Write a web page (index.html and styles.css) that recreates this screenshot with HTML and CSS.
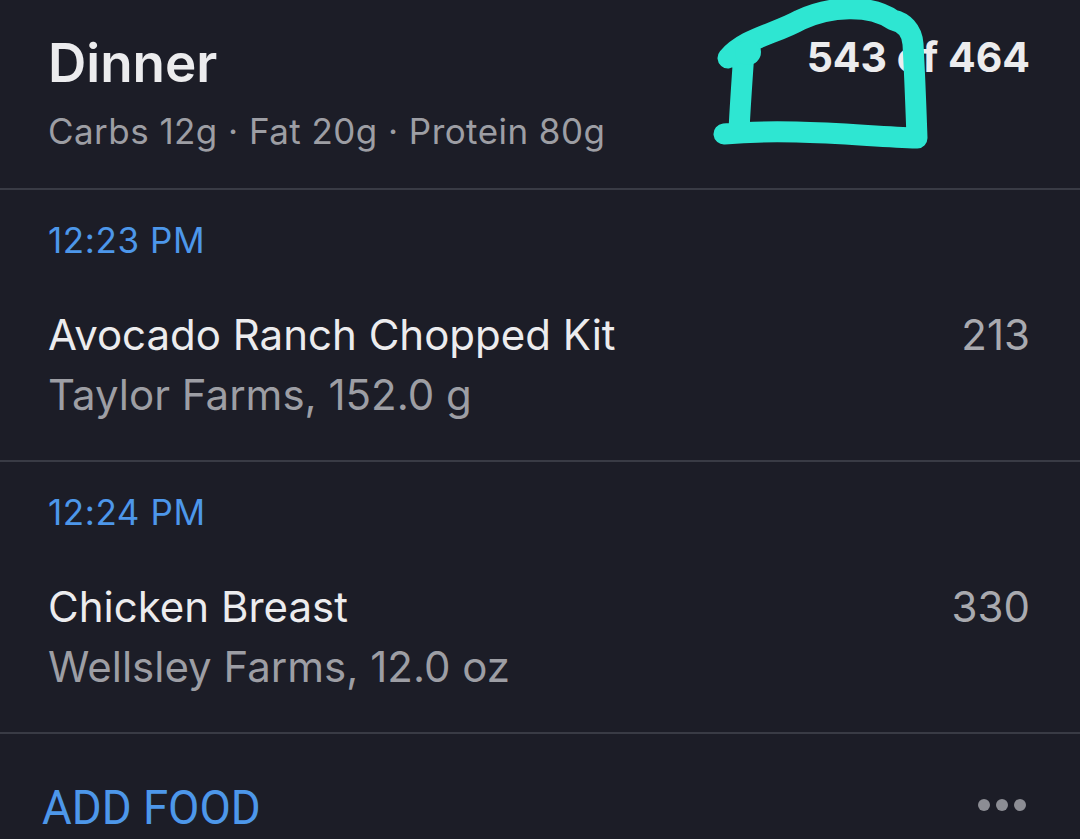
FILE: index.html
```html
<!DOCTYPE html>
<html lang="en">
<head>
<meta charset="utf-8">
<title>Dinner</title>
<link rel="stylesheet" href="styles.css">
</head>
<body>
<main class="meal">
  <header class="meal-head">
    <div class="meal-info">
      <h1 class="meal-title">Dinner</h1>
      <p class="meal-macros">Carbs 12g · Fat 20g · Protein 80g</p>
    </div>
    <div class="meal-total">543 of 464</div>
  </header>

  <section class="entry">
    <div class="entry-time">12:23 PM</div>
    <div class="entry-row">
      <div class="entry-text">
        <div class="entry-name">Avocado Ranch Chopped Kit</div>
        <div class="entry-sub">Taylor Farms, 152.0 g</div>
      </div>
      <div class="entry-cal">213</div>
    </div>
  </section>

  <section class="entry">
    <div class="entry-time">12:24 PM</div>
    <div class="entry-row">
      <div class="entry-text">
        <div class="entry-name">Chicken Breast</div>
        <div class="entry-sub">Wellsley Farms, 12.0 oz</div>
      </div>
      <div class="entry-cal">330</div>
    </div>
  </section>

  <footer class="meal-foot">
    <span class="add-food">ADD FOOD</span>
    <span class="more" aria-label="More">
      <i class="dot"></i><i class="dot"></i><i class="dot"></i>
    </span>
  </footer>
</main>

<svg class="scribble" width="1080" height="839" viewBox="0 0 1080 839" aria-hidden="true">
  <path d="M744 52 C742 80 740 110 739 130
           M728 58 C745 38 775 34 800 20 C830 6 870 4 893 20 C903 22 912 30 913 44
           C915 80 916 110 917 138
           C860 136 790 128 724 134"
        fill="none" stroke="#2ee6d2" stroke-width="21" stroke-linecap="round" stroke-linejoin="round"/>
  <circle cx="748" cy="52" r="13" fill="#2ee6d2"/>
</svg>
</body>
</html>
```

FILE: styles.css
```css
html, body {
  margin: 0;
  padding: 0;
  background: #1c1d27;
}

body {
  width: 1080px;
  height: 839px;
  overflow: hidden;
  position: relative;
  font-family: Inter, "Noto Sans", "Liberation Sans", sans-serif;
  color: #e9e9eb;
}

.meal {
  display: flex;
  flex-direction: column;
}

.meal-head {
  display: flex;
  justify-content: space-between;
  align-items: flex-start;
  padding: 32px 50px 37px 48px;
  border-bottom: 2px solid #393b45;
}

.meal-title {
  margin: 0;
  font-size: 53px;
  line-height: 62px;
  font-weight: 600;
  color: #ececee;
}

.meal-macros {
  margin: 17px 0 0;
  font-size: 35px;
  line-height: 40px;
  letter-spacing: 0.45px;
  color: #9d9ea4;
}

.meal-total {
  font-size: 41px;
  line-height: 50px;
  font-weight: 700;
  color: #ececee;
}

.entry {
  padding: 30px 50px 40px 48px;
  border-bottom: 2px solid #393b45;
}

.entry-time {
  font-size: 35px;
  line-height: 41px;
  letter-spacing: 0.6px;
  color: #4d97ea;
}

.entry-row {
  display: flex;
  justify-content: space-between;
  align-items: flex-start;
  margin-top: 48px;
}

.entry-text {
  display: flex;
  flex-direction: column;
  gap: 9px;
}

.entry-name {
  font-size: 42px;
  line-height: 51px;
  color: #ececee;
}

.entry-sub {
  font-size: 42px;
  line-height: 51px;
  color: #9d9ea4;
}

.entry-cal {
  font-size: 42px;
  line-height: 51px;
  color: #a9aaaf;
}

.meal-foot {
  display: flex;
  justify-content: space-between;
  align-items: center;
  padding: 46px 54px 0 42px;
}

.add-food {
  font-family: Roboto, "Liberation Sans", sans-serif;
  font-size: 48px;
  line-height: 56px;
  color: #4d97ea;
  display: inline-block;
  transform: scaleX(0.95);
  transform-origin: left center;
}

.more {
  display: flex;
  gap: 6px;
  margin-top: -6px;
}

.dot {
  display: block;
  width: 12px;
  height: 12px;
  border-radius: 50%;
  background: #8c8d94;
}

.scribble {
  position: absolute;
  left: 0;
  top: 0;
  pointer-events: none;
}
```
